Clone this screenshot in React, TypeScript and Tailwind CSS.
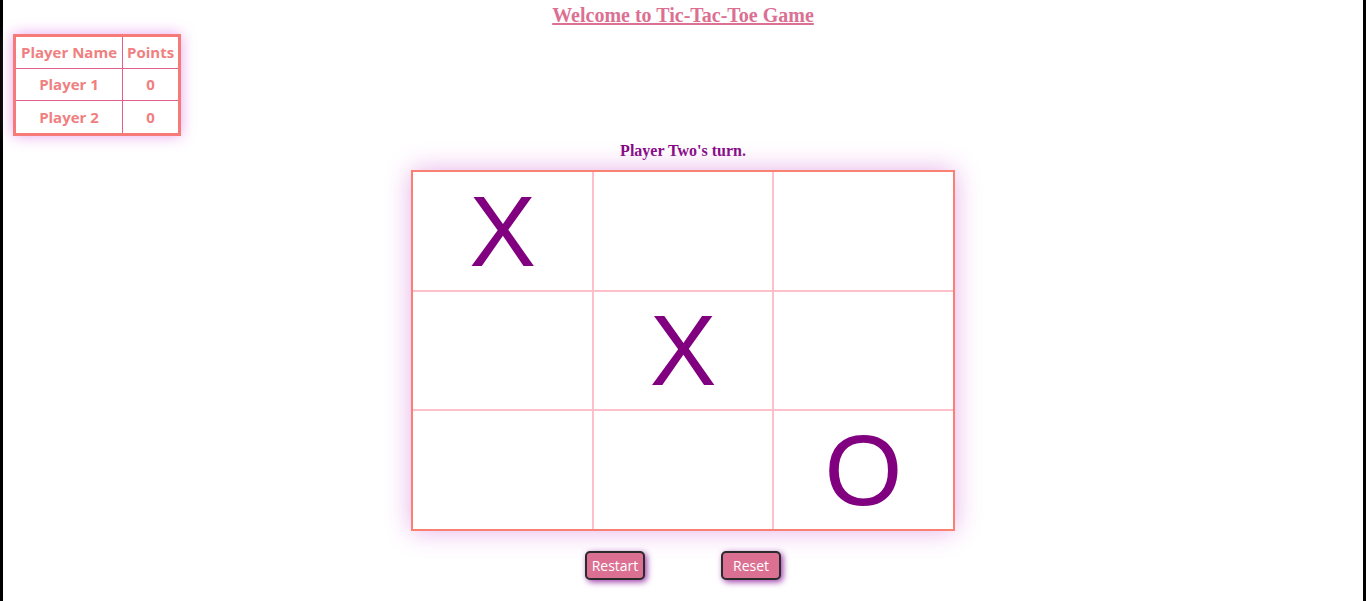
import React from "react";

const cells = ["X", "", "", "", "X", "", "", "", "O"];

export default function App() {
  return (
    <div className="min-h-screen bg-white border-x-[3px] border-black">
      <h1
        className="text-center h-[30px] leading-[30px] text-[20px] font-bold underline text-[#db7093]"
        style={{ fontFamily: '"Liberation Serif", serif' }}
      >
        Welcome to Tic-Tac-Toe Game
      </h1>
      <div className="ml-[10px] mt-[4px]">
        <table
          className="border-[3px] border-[#f67a78] border-separate border-spacing-0 text-[#f08080] font-bold text-[15px] shadow-[0_0_14px_#e9a6ee]"
          style={{ fontFamily: '"Open Sans", sans-serif' }}
        >
          <tbody>
            <tr className="h-[32px]">
              <td className="px-[5px] text-center border-r border-b border-[#e0608a]">Player Name</td>
              <td className="px-[4px] text-center border-b border-[#e0608a]">Points</td>
            </tr>
            <tr className="h-[32px]">
              <td className="px-[5px] text-center border-r border-b border-[#e0608a]">Player 1</td>
              <td className="px-[4px] text-center border-b border-[#e0608a]">0</td>
            </tr>
            <tr className="h-[32px]">
              <td className="px-[5px] text-center border-r border-[#e0608a]">Player 2</td>
              <td className="px-[4px] text-center">0</td>
            </tr>
          </tbody>
        </table>
      </div>
      <p
        className="mt-[5px] text-center text-[16px] leading-[20px] font-bold text-[#800080]"
        style={{ fontFamily: '"Liberation Serif", serif' }}
      >
        Player Two's turn.
      </p>
      <div className="flex justify-center mt-[9px]">
        <div className="grid grid-cols-[181px_180px_179px] grid-rows-[120px_119px_118px] border-2 border-[#fa8072] shadow-[0_0_25px_#e7b0ea]">
          {cells.map((c, i) => (
            <div
              key={i}
              className={
                "border-[#ffc0cb] flex items-center justify-center text-[100px] text-[#800080] leading-none " +
                (i % 3 !== 2 ? "border-r-2 " : "") +
                (i < 6 ? "border-b-2" : "")
              }
              style={{ fontFamily: '"Liberation Sans", Arial, sans-serif' }}
            >
              <span className="-mt-[1px]">{c}</span>
            </div>
          ))}
        </div>
      </div>
      <div className="flex justify-center gap-[76px] mt-[20px]">
        {["Restart", "Reset"].map((b) => (
          <button
            key={b}
            className="w-[60px] h-[29px] bg-[#db7093] text-white text-[14px] border-2 border-[#2b2b2b] rounded-[5px] shadow-[2px_2px_6px_#9b3ca8]"
            style={{ fontFamily: '"Open Sans", sans-serif' }}
          >
            {b}
          </button>
        ))}
      </div>
    </div>
  );
}
